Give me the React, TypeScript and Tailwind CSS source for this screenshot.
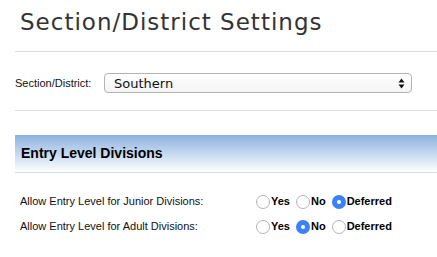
import type React from 'react'

const labelFont = { fontFamily: '"Liberation Sans", Arial, sans-serif' }

function Radio({ checked }: { checked: boolean }) {
  if (checked) {
    return (
      <span className="flex h-[14px] w-[14px] shrink-0 items-center justify-center rounded-full bg-[#3b82f6]">
        <span className="h-[4px] w-[4px] rounded-full bg-white" />
      </span>
    )
  }
  return <span className="h-[14px] w-[14px] shrink-0 rounded-full border border-[#b5b5b5] bg-white" />
}

function RadioGroup({ value }: { value: string }) {
  const options = ['Yes', 'No', 'Deferred']
  return (
    <div className="flex items-center gap-[6px]">
      {options.map((opt) => (
        <label key={opt} className="flex items-center gap-[1px] text-[11px] font-bold text-black">
          <Radio checked={opt === value} />
          <span>{opt}</span>
        </label>
      ))}
    </div>
  )
}

function SettingRow({ label, value }: { label: string; value: string }) {
  return (
    <div className="flex h-[25px] items-center">
      <div className="w-[236px] text-[11px] text-[#111]">{label}</div>
      <RadioGroup value={value} />
    </div>
  )
}

export default function App() {
  const rows: { label: string; value: string }[] = [
    { label: 'Allow Entry Level for Junior Divisions:', value: 'Deferred' },
    { label: 'Allow Entry Level for Adult Divisions:', value: 'No' },
  ]

  return (
    <div className="h-[257px] w-[437px] overflow-hidden bg-white" style={labelFont as React.CSSProperties}>
      <h1
        className="pl-[20px] pt-[7px] text-[23px] font-normal leading-[30px] tracking-[1px] text-[#333]"
        style={{ fontFamily: '"DejaVu Sans", Verdana, sans-serif' }}
      >
        Section/District Settings
      </h1>

      <div className="ml-[15px] mt-[14px] border-t border-[#dcdcdc] pb-[17px] pt-[21px]">
        <div className="flex items-center">
          <span className="w-[89px] text-[11px] text-[#111]">Section/District:</span>
          <div className="flex h-[20px] w-[308px] items-center justify-between rounded-[4px] border border-[#b3b3b3] bg-gradient-to-b from-white to-[#f4f4f4] pl-[9px] pr-[6px]">
            <span
              className="text-[13px] leading-none text-[#111]"
              style={{ fontFamily: '"DejaVu Sans", Verdana, sans-serif' }}
            >
              Southern
            </span>
            <svg width="7" height="11" viewBox="0 0 7 11">
              <path d="M3.5 0.5 L6.5 4.5 L0.5 4.5 Z" fill="#111" />
              <path d="M3.5 10.5 L6.5 6.5 L0.5 6.5 Z" fill="#111" />
            </svg>
          </div>
        </div>
      </div>

      <div className="ml-[15px] border-t border-[#dcdcdc] pt-[24px]">
        <div className="flex h-[38px] items-center border-b border-[#dcdcdc] bg-gradient-to-b from-[#8db2de] to-white pl-[6px]">
          <h2 className="text-[14px] font-bold text-black">Entry Level Divisions</h2>
        </div>
        <div className="pt-[16px] pl-[5px]">
          {rows.map((r) => (
            <SettingRow key={r.label} label={r.label} value={r.value} />
          ))}
        </div>
      </div>
    </div>
  )
}
